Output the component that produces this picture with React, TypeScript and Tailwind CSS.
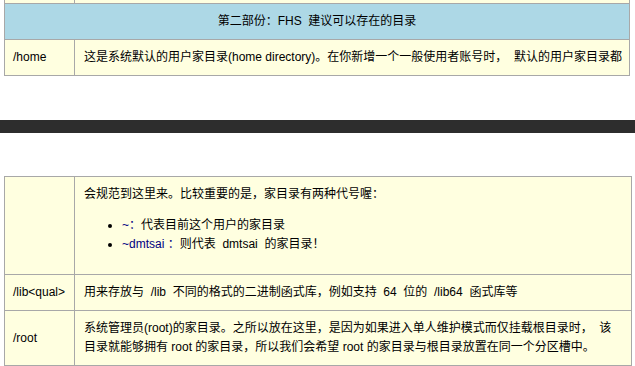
const font = {
  fontFamily: '"Liberation Sans", "Noto Sans CJK SC", sans-serif',
};

// the source text pads some Latin words with an extra non-breaking space
const sp = '\u00a0 ';

function Row({ name, children, last }: { name?: string; children: React.ReactNode; last?: boolean }) {
  return (
    <div className={`grid grid-cols-[70px_1fr] ${last ? '' : 'border-b border-[#a8a8a8]'}`}>
      <div className="border-r border-[#a8a8a8] px-2 py-2 flex items-center">{name}</div>
      <div className="pl-[9px] pr-2 py-2">{children}</div>
    </div>
  );
}

export default function App() {
  return (
    <div className="w-[635px] h-[366px] overflow-hidden bg-white text-[12px] leading-[19px] text-black" style={font}>
      {/* upper part of the table */}
      <div className="ml-[4px] w-[626px] border-x border-b border-[#a8a8a8] bg-[#ffffe0]">
        <div className="grid grid-cols-[70px_1fr] h-[4px] border-b border-[#a8a8a8]">
          <div className="border-r border-[#a8a8a8]" />
          <div />
        </div>
        <div className="bg-[#add8e6] border-b border-[#a8a8a8] py-2 text-center">
          {`第二部份：FHS${sp}建议可以存在的目录`}
        </div>
        <Row name="/home" last>
          <div className="whitespace-nowrap overflow-hidden">
            {`这是系统默认的用户家目录(home directory)。在你新增一个一般使用者账号时，${sp}默认的用户家目录都`}
          </div>
        </Row>
      </div>

      <div className="mt-[44px] h-[13px] bg-[#2d2d2d]" />

      {/* lower part of the table */}
      <div className="mt-[43px] ml-[4px] w-[628px] border border-[#a8a8a8] bg-[#ffffe0]">
        <Row>
          <p>会规范到这里来。比较重要的是，家目录有两种代号喔：</p>
          <ul className="list-disc pl-[38px] my-3">
            <li>
              <span className="text-[#000080]">~：</span>代表目前这个用户的家目录
            </li>
            <li>
              <span className="text-[#000080]">~dmtsai{'\u00a0'}：</span>
              {`则代表${sp}dmtsai${sp}的家目录！`}
            </li>
          </ul>
        </Row>
        <Row name="/lib<qual>">
          {`用来存放与${sp}/lib${sp}不同的格式的二进制函式库，例如支持${sp}64${sp}位的${sp}/lib64${sp}函式库等`}
        </Row>
        <Row name="/root" last>
          {`系统管理员(root)的家目录。之所以放在这里，是因为如果进入单人维护模式而仅挂载根目录时，${sp}该`}
          <br />
          目录就能够拥有 root 的家目录，所以我们会希望 root 的家目录与根目录放置在同一个分区槽中。
        </Row>
      </div>
    </div>
  );
}
